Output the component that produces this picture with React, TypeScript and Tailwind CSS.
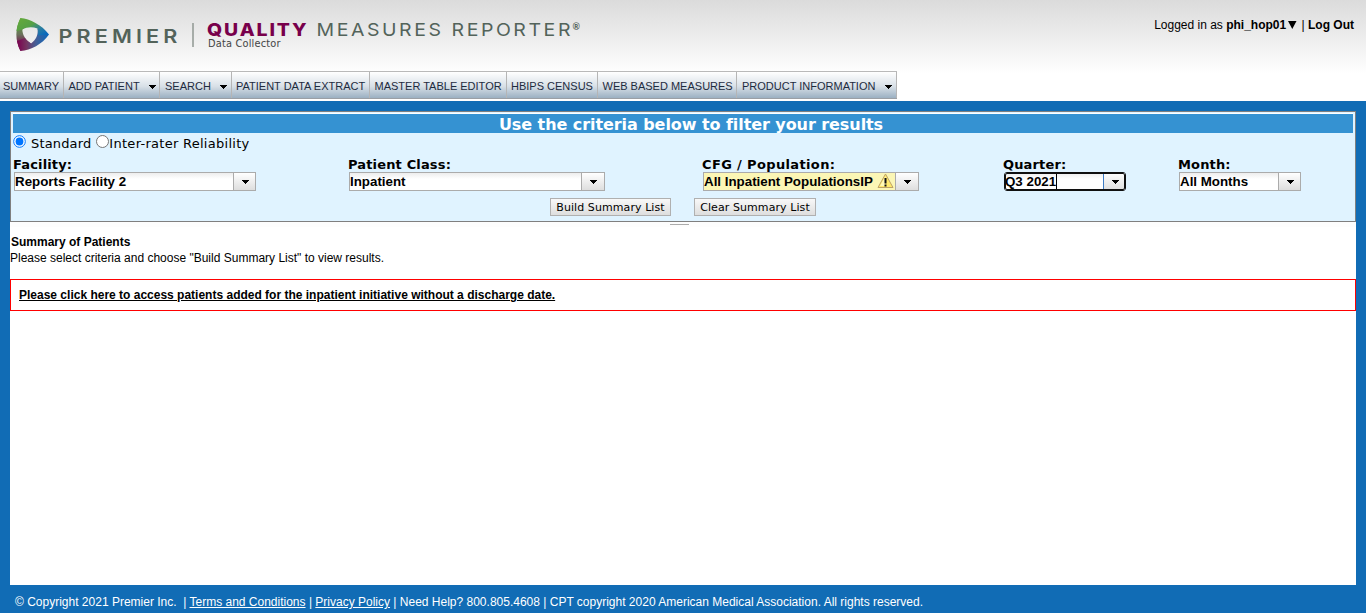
import React from 'react';

const sans = "font-['Liberation_Sans',Arial,sans-serif]";
const verdana = "font-['DejaVu_Sans',Verdana,sans-serif]";

function Caret() {
  return (
    <svg width="7" height="4" viewBox="0 0 7 4" shapeRendering="crispEdges" className="block shrink-0">
      <path d="M0 0h7v1H0zM1 1h5v1H1zM2 2h3v1H2zM3 3h1v1H3z" fill="#000" />
    </svg>
  );
}

const navItems = [
  { label: 'SUMMARY', width: 'w-[64px]', pad: 'pl-[3px]', menu: '' },
  { label: 'ADD PATIENT', width: 'w-[96px]', pad: 'pl-[4.5px]', menu: 'mr-[3px]' },
  { label: 'SEARCH', width: 'w-[72px]', pad: 'pl-[5px]', menu: 'mr-[4px]' },
  { label: 'PATIENT DATA EXTRACT', width: 'w-[138px]', pad: 'pl-[4px]', menu: '' },
  { label: 'MASTER TABLE EDITOR', width: 'w-[137px]', pad: 'pl-[4.5px]', menu: '' },
  { label: 'HBIPS CENSUS', width: 'w-[91px]', pad: 'pl-[4px]', menu: '' },
  { label: 'WEB BASED MEASURES', width: 'w-[139px]', pad: 'pl-[4.5px]', menu: '' },
  { label: 'PRODUCT INFORMATION', width: 'w-[160px]', pad: 'pl-[5px]', menu: 'mr-[4px]' },
];

function Logo() {
  return (
    <svg width="600" height="60" viewBox="0 0 600 60" className="block">
      <defs>
        <linearGradient id="top" x1="0.1" y1="0.1" x2="1" y2="0.8">
          <stop offset="0" stopColor="#62a83c" />
          <stop offset="0.4" stopColor="#55a046" />
          <stop offset="0.7" stopColor="#2c7fa0" />
          <stop offset="1" stopColor="#0868bd" />
        </linearGradient>
        <linearGradient id="left" x1="0" y1="0" x2="0" y2="1">
          <stop offset="0" stopColor="#62a83c" />
          <stop offset="0.2" stopColor="#5f9a42" />
          <stop offset="0.5" stopColor="#6b715c" />
          <stop offset="0.85" stopColor="#7a0050" />
        </linearGradient>
        <linearGradient id="bottom" x1="0" y1="0" x2="1" y2="0">
          <stop offset="0" stopColor="#7a0050" />
          <stop offset="0.3" stopColor="#753561" />
          <stop offset="0.6" stopColor="#435f98" />
          <stop offset="1" stopColor="#0868bd" />
        </linearGradient>
      </defs>
      <path d="M20.500 18C15 29 15 40 20.500 51L31 43.500C25.500 40 22.500 35 22.300 29.500L28 25Z" fill="url(#left)" />
      <path d="M20.500 51C31 50 42 44.500 49 34.500L37.500 28.500C38.500 34.500 36 40 31 43.500C28.500 42 26.500 40.500 25 38L17 41C18 45 19 48 20.500 51Z" fill="url(#bottom)" />
      <path d="M20.500 18C30 19 41.500 24.500 49 34.500L38 35.500C38.500 33 38.200 31 37.500 28.500C32 26.500 27 27 22.300 29.500L16.500 31C17 26.500 18.500 21.500 20.500 18Z" fill="url(#top)" />
      <text x="58.500" y="42.500" textLength="123" lengthAdjust="spacingAndGlyphs" letterSpacing="3.600" fontSize="18.800" fontWeight="600" fill="#53635a" fontFamily="Inter, sans-serif">PREMIER</text>
      <path d="M193 23V47" stroke="#8f9792" strokeWidth="1.500" />
      <text x="207" y="36" textLength="101.500" lengthAdjust="spacingAndGlyphs" letterSpacing="1.700" fontSize="17.500" fontWeight="800" fill="#78004b" fontFamily="Inter, sans-serif">QUALITY</text>
      <text x="316.500" y="36" textLength="256.500" lengthAdjust="spacingAndGlyphs" letterSpacing="2.300" fontSize="17.500" fontWeight="400" fill="#53635a" fontFamily="Inter, sans-serif">MEASURES REPORTER</text>
      <text x="572.500" y="30" fontSize="9" fontWeight="700" fill="#53635a" fontFamily="Lato, sans-serif">®</text>
      <text x="208" y="47" textLength="72.500" fontSize="9.800" fill="#444" fontFamily="DejaVu Sans, sans-serif">Data Collector</text>
    </svg>
  );
}

type ComboProps = {
  label: string;
  value: string;
  column: string;
  width: string;
  arrow: string;
  tracking?: string;
  warning?: boolean;
  focused?: boolean;
};

function WarningIcon() {
  return (
    <svg width="17" height="16" viewBox="0 0 17 16" className="mr-px mb-px ml-auto block shrink-0">
      <path d="M8.500 1L16 14.500H1Z" fill="#ffe96b" stroke="#bda269" strokeWidth="1" strokeLinejoin="round" />
      <path d="M8.500 3L3 13H8.500Z" fill="#fff9b8" />
      <path d="M7.500 5H9.500V10.500H7.500ZM7.500 11.500H9.500V13.500H7.500Z" fill="#111" />
    </svg>
  );
}

function Combo({ label, value, column, width, arrow, tracking = 'tracking-[0.15px]', warning, focused }: ComboProps) {
  return (
    <div className={column}>
      <div className={`${verdana} ${tracking} h-[15px] whitespace-nowrap text-[13px] leading-[15px] font-bold`}>{label}</div>
      <div
        className={`ml-px flex h-[19px] border ${width} ${
          focused ? 'rounded-[3px] border-[#101010] outline outline-1 outline-[#101010] -outline-offset-2' : 'border-[#ababab]'
        }`}
      >
        <div
          className={`${sans} flex min-w-0 flex-1 items-center text-[13.333px] leading-[17px] font-bold whitespace-nowrap ${
            warning ? 'bg-[#fbf6b5]' : 'bg-linear-to-b from-[#ededed] via-white via-35% to-white'
          } ${focused ? 'rounded-l-[2px]' : ''}`}
        >
          <span>{value}</span>
          {focused && <span className="h-[15px] w-px bg-black" />}
          {warning && <WarningIcon />}
        </div>
        <div
          className={`flex shrink-0 items-center justify-center border-l bg-linear-to-b from-white to-[#dedede] pt-px ${arrow} ${
            focused ? 'rounded-r-[2px] border-[#3d7bc4]' : 'border-[#ababab]'
          }`}
        >
          <Caret />
        </div>
      </div>
    </div>
  );
}

function ListButton({ children, width }: { children: string; width: string }) {
  return (
    <button
      type="button"
      className={`${verdana} ${width} h-[18px] border border-[#b0b0b0] bg-linear-to-b from-[#f8f8f8] to-[#dedede] p-0 pt-px text-[11px] leading-[15px] tracking-[0.08px] whitespace-nowrap text-black`}
    >
      {children}
    </button>
  );
}

export default function App() {
  return (
    <div className={`${sans} flex h-[613px] w-[1366px] flex-col overflow-hidden bg-[#116cb5] text-[12px] text-black`}>
      <header className="flex h-[101px] shrink-0 flex-col bg-white bg-linear-to-b from-[#dbdbdb] to-white to-[74px]">
        <div className="flex h-[71px] justify-between">
          <Logo />
          <div className="pt-[17px] pr-[12px] leading-[16px] whitespace-nowrap">
            Logged in as <b>phi_hop01</b>
            <svg width="9" height="8" viewBox="0 0 9 8" className="mr-[1px] ml-[2px] inline-block align-[0px]">
              <path d="M0 0H8.500L4.250 8Z" />
            </svg>{' '}
            | <b>Log Out</b>
          </div>
        </div>
        <nav className="flex h-[28px] w-[897px] border-t border-b border-t-[#b9b9b9] border-b-[#9a9fa5] bg-linear-to-b from-white via-[#d8e0e7] via-55% to-[#9bb0c2] text-[11px] text-[#1e2b3e]">
          {navItems.map((item) => (
            <div key={item.label} className={`flex items-center border-r border-[#b5b5b5] whitespace-nowrap ${item.width} ${item.pad}`}>
              <span className="pt-[3px]">{item.label}</span>
              {item.menu && (
                <span className={`mt-[3px] ml-auto ${item.menu}`}>
                  <Caret />
                </span>
              )}
            </div>
          ))}
        </nav>
      </header>

      <main className="mx-[10px] mt-[10px] flex h-[474px] shrink-0 flex-col bg-white">
        <section className="h-[111px] shrink-0 border border-[#7f7f7f] bg-[#e0f3ff] px-[2px] pt-[2px]">
          <h1 className={`${verdana} -mt-px h-[20px] border-t border-white bg-[#3592d2] pt-px pl-[16px] text-center text-[16px] leading-[19px] font-bold tracking-[-0.07px] text-white`}>
            Use the criteria below to filter your results
          </h1>
          <div className={`${verdana} flex h-[24px] items-start text-[13px] leading-[20px] whitespace-nowrap`}>
            <svg width="13" height="13" viewBox="0 0 13 13" className="mt-[2px] block">
              <circle cx="6.500" cy="6.500" r="5.800" fill="#fff" stroke="#0075ff" />
              <circle cx="6.500" cy="6.500" r="3.900" fill="#0075ff" />
            </svg>
            <span className="ml-[5px] pt-px tracking-[0.15px]">Standard</span>
            <svg width="13" height="13" viewBox="0 0 13 13" className="mt-[2px] ml-[5px] block">
              <circle cx="6.500" cy="6.500" r="6" fill="#fff" stroke="#767676" />
            </svg>
            <span className="pt-px tracking-[0.28px]">Inter-rater Reliability</span>
          </div>
          <div className="flex">
            <Combo label="Facility:" value="Reports Facility 2" column="w-[335px]" width="w-[242px]" arrow="w-[22px] pl-px" />
            <Combo label="Patient Class:" value="Inpatient" column="w-[354px]" width="w-[256px]" arrow="w-[23px]" />
            <Combo label="CFG / Population:" value="All Inpatient PopulationsIP" column="w-[301px]" width="w-[216px]" arrow="w-[23px]" tracking="tracking-[0.36px]" warning />
            <Combo label="Quarter:" value="Q3 2021" column="w-[175px]" width="w-[122px]" arrow="w-[22px] pl-px" focused />
            <Combo label="Month:" value="All Months" column="w-[150px]" width="w-[122px]" arrow="w-[22px] pl-px" />
          </div>
          <div className="mt-[7px] flex gap-[23px] pl-[537px]">
            <ListButton width="w-[121px]">Build Summary List</ListButton>
            <ListButton width="w-[122px]">Clear Summary List</ListButton>
          </div>
        </section>
        <div className="h-[5px] shrink-0 bg-[#fdfdfd] pt-[2px] pl-[660px]">
          <div className="h-px w-[19px] bg-[#ababab]" />
        </div>
        <div className="h-[52px] shrink-0 pt-[7px] leading-[16px]">
          <p className="pl-px font-bold">Summary of Patients</p>
          <p>Please select criteria and choose "Build Summary List" to view results.</p>
        </div>
        <div className="h-[32px] shrink-0 border border-[#ff0000] pl-[8px] leading-[30px]">
          <a className="font-bold underline">Please click here to access patients added for the inpatient initiative without a discharge date.</a>
        </div>
      </main>

      <footer className="pt-[9px] pl-[15px] leading-[16px] whitespace-pre text-white">
        © Copyright 2021 Premier Inc.{'  '}| <a className="underline">Terms and Conditions</a> | <a className="underline">Privacy Policy</a> | Need Help? 800.805.4608 | CPT copyright 2020 American Medical Association. All rights reserved.
      </footer>
    </div>
  );
}
